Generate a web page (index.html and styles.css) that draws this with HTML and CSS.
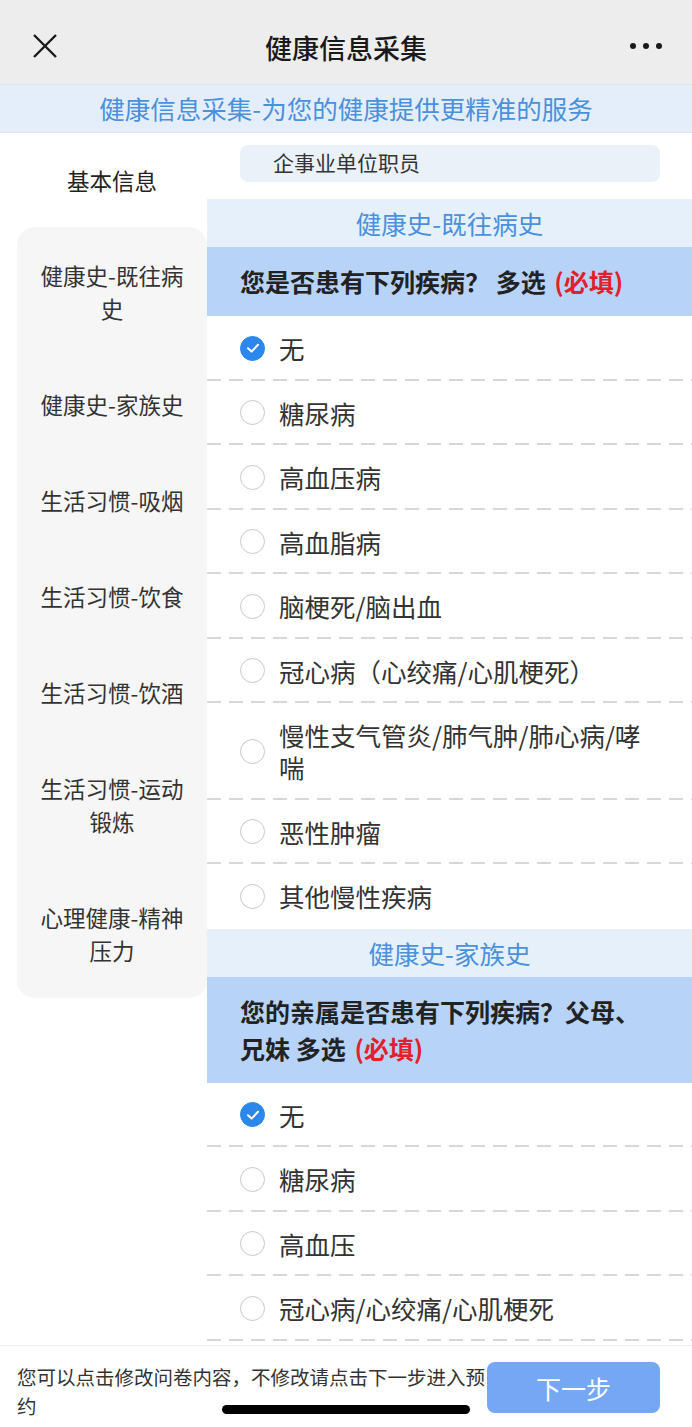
FILE: index.html
```html
<!DOCTYPE html>
<html lang="zh-CN">
<head>
    <meta charset="UTF-8">
    <meta name="viewport" content="width=device-width, initial-scale=1.0">
    <title>健康信息采集</title>
    <link rel="stylesheet" href="styles.css">
</head>
<body>
    <div class="nav">
        <div class="nav-side">
            <svg class="nav-close" width="26" height="26" viewBox="0 0 26 26">
                <path d="M2 2L24 24M24 2L2 24" stroke="#1a1a1a" stroke-width="2.4" fill="none"/>
            </svg>
        </div>
        <h1 class="nav-title">健康信息采集</h1>
        <div class="nav-side right">
            <div class="nav-more"><span></span><span></span><span></span></div>
        </div>
    </div>
    <div class="banner">健康信息采集-为您的健康提供更精准的服务</div>

    <div class="main">
        <div class="side">
            <div class="side-top">基本信息</div>
            <div class="side-panel">
                <div class="side-item">健康史-既往病史</div>
                <div class="side-item">健康史-家族史</div>
                <div class="side-item">生活习惯-吸烟</div>
                <div class="side-item">生活习惯-饮食</div>
                <div class="side-item">生活习惯-饮酒</div>
                <div class="side-item">生活习惯-运动锻炼</div>
                <div class="side-item">心理健康-精神压力</div>
            </div>
        </div>

        <div class="content">
            <div class="answer-box">企事业单位职员</div>

            <div class="section-title">健康史-既往病史</div>
            <div class="question">您是否患有下列疾病？ 多选 <span class="required">(必填)</span></div>
            <div class="options">
                <div class="option checked"><i class="radio"><svg width="14" height="14" viewBox="0 0 14 14"><path d="M2 7.2L5.6 10.6L12 3.8" stroke="#fff" stroke-width="2" fill="none" stroke-linecap="round" stroke-linejoin="round"/></svg></i><span>无</span></div>
                <div class="option"><i class="radio"></i><span>糖尿病</span></div>
                <div class="option"><i class="radio"></i><span>高血压病</span></div>
                <div class="option"><i class="radio"></i><span>高血脂病</span></div>
                <div class="option"><i class="radio"></i><span>脑梗死/脑出血</span></div>
                <div class="option"><i class="radio"></i><span>冠心病（心绞痛/心肌梗死）</span></div>
                <div class="option"><i class="radio"></i><span>慢性支气管炎/肺气肿/肺心病/哮喘</span></div>
                <div class="option"><i class="radio"></i><span>恶性肿瘤</span></div>
                <div class="option last"><i class="radio"></i><span>其他慢性疾病</span></div>
            </div>

            <div class="section-title">健康史-家族史</div>
            <div class="question"><span>您的亲属是否患有下列疾病？父母、</span><span>兄妹 多选</span> <span class="required">(必填)</span></div>
            <div class="options">
                <div class="option checked"><i class="radio"><svg width="14" height="14" viewBox="0 0 14 14"><path d="M2 7.2L5.6 10.6L12 3.8" stroke="#fff" stroke-width="2" fill="none" stroke-linecap="round" stroke-linejoin="round"/></svg></i><span>无</span></div>
                <div class="option"><i class="radio"></i><span>糖尿病</span></div>
                <div class="option"><i class="radio"></i><span>高血压</span></div>
                <div class="option"><i class="radio"></i><span>冠心病/心绞痛/心肌梗死</span></div>
            </div>
        </div>
    </div>

    <div class="footer">
        <p class="footer-tip">您可以点击修改问卷内容，不修改请点击下一步进入预约</p>
        <button class="next-btn">下一步</button>
        <div class="home-bar"></div>
    </div>
</body>
</html>
```
FILE: styles.css
```css
*{
    margin:0;
    padding:0;
    box-sizing:border-box;
}
body{
    width:692px;
    height:1427px;
    overflow:hidden;
    background:#fff;
    font-family:"Noto Sans CJK SC", "Noto Sans", sans-serif;
    color:#333;
    position:relative;
}
.nav{
    height:84px;
    background:#ededed;
    display:flex;
    align-items:center;
    padding:8px 0 0;
}
.nav-side{
    width:120px;
    padding-left:32px;
    display:flex;
    align-items:center;
}
.nav-side.right{
    justify-content:flex-end;
    padding:0 30px 0 0;
}
.nav-title{
    flex:1;
    text-align:center;
    font-size:27px;
    font-weight:500;
    color:#1a1a1a;
    padding-top:2px;
}
.nav-more{
    display:flex;
    gap:7px;
}
.nav-more span{
    width:6px;
    height:6px;
    border-radius:50%;
    background:#1a1a1a;
}
.banner{
    height:49px;
    background:#e4eefb;
    border-top:1px solid #dde6f0;
    border-bottom:1px solid #e2e4e8;
    color:#4a90dc;
    font-size:25.5px;
    line-height:46px;
    text-align:center;
}
.main{
    display:flex;
    align-items:flex-start;
}
.side{
    width:207px;
    flex-shrink:0;
    padding-left:17px;
}
.side-top{
    height:94px;
    line-height:94px;
    text-align:center;
    font-size:22.5px;
    color:#222;
}
.side-panel{
    background:#f6f6f6;
    border-radius:18px;
}
.side-item{
    padding:31.5px 18px;
    font-size:22.5px;
    line-height:33px;
    text-align:center;
    color:#333;
}
.content{
    flex:1;
    padding-top:12px;
}
.answer-box{
    margin:0 32px 17px 33px;
    height:37px;
    background:#ebf1f9;
    border-radius:8px;
    padding-left:33px;
    font-size:21px;
    line-height:35px;
    color:#333;
}
.section-title{
    height:48px;
    background:#e6f0fb;
    color:#4a90dc;
    font-size:25.5px;
    line-height:47px;
    text-align:center;
}
.question{
    background:#b7d3f8;
    padding:16px 40px 16px 33px;
    font-size:25px;
    line-height:37px;
    font-weight:700;
    color:#222;
}
.required{
    color:#e2202b;
    margin-left:3px;
}
.option{
    display:flex;
    align-items:center;
    padding:16px 36px 16.5px 33px;
    font-size:25.5px;
    line-height:32px;
    color:#333;
    background-image:repeating-linear-gradient(to right, #d8d8d8 0 14px, transparent 14px 22px);
    background-size:100% 2px;
    background-position:bottom left;
    background-repeat:no-repeat;
}
.option.last{
    background-image:none;
}
.radio{
    width:25px;
    height:25px;
    border-radius:50%;
    border:1.5px solid #c9c9c9;
    flex-shrink:0;
    margin-right:14px;
    display:flex;
    align-items:center;
    justify-content:center;
}
.option.checked .radio{
    background:#2b87ec;
    border-color:#2b87ec;
}
.footer{
    position:absolute;
    left:0;
    right:0;
    bottom:0;
    height:82px;
    background:#fff;
    border-top:1px solid #eeeeee;
    display:flex;
    align-items:flex-start;
    padding:16px 32px 0 17px;
}
.footer-tip{
    width:470px;
    font-size:19.5px;
    line-height:29px;
    color:#333;
}
.next-btn{
    margin-left:auto;
    width:173px;
    height:51px;
    border:0;
    border-radius:8px;
    background:#76a7f5;
    color:#fff;
    font-family:inherit;
    font-size:25px;
}
.home-bar{
    position:absolute;
    left:222px;
    bottom:13px;
    width:248px;
    height:9px;
    border-radius:5px;
    background:#000;
}
```
